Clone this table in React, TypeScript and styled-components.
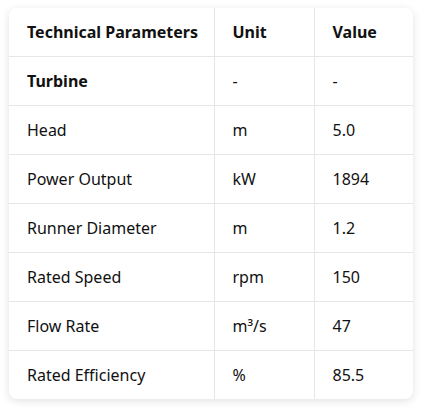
import styled, { createGlobalStyle } from 'styled-components';

const Global = createGlobalStyle`
  body {
    margin: 0;
    background: #ffffff;
    font-family: "Noto Sans", "Open Sans", sans-serif;
    color: #111111;
  }
`;

const Page = styled.div`
  padding: 8px 12px 10px 9px;
`;

const Card = styled.div`
  width: 404px;
  border-radius: 8px;
  overflow: hidden;
  background: #ffffff;
  box-shadow: 0 2px 8px rgba(0, 0, 0, 0.12);
`;

const Table = styled.table`
  width: 100%;
  border-collapse: collapse;
  table-layout: fixed;

  tbody tr:last-child td {
    border-bottom: none;
  }
`;

const Cell = styled.td<{ $bold?: boolean }>`
  height: 48px;
  padding: 0 0 0 18px;
  font-size: 16px;
  font-weight: ${(p) => (p.$bold ? 700 : 400)};
  border-bottom: 1px solid #e6e6e6;
  border-right: 1px solid #e6e6e6;
  vertical-align: middle;
  &:last-child {
    border-right: none;
  }
`;

const HeadCell = styled(Cell).attrs({ as: 'th' })`
  text-align: left;
  font-weight: 700;
`;

const rows: [string, string, string][] = [
  ['Head', 'm', '5.0'],
  ['Power Output', 'kW', '1894'],
  ['Runner Diameter', 'm', '1.2'],
  ['Rated Speed', 'rpm', '150'],
  ['Flow Rate', 'm³/s', '47'],
  ['Rated Efficiency', '%', '85.5'],
];

export default function App() {
  return (
    <Page>
      <Global />
      <Card>
        <Table>
          <colgroup>
            <col style={{ width: 205 }} />
            <col style={{ width: 100 }} />
            <col />
          </colgroup>
          <thead>
            <tr>
              <HeadCell>Technical Parameters</HeadCell>
              <HeadCell>Unit</HeadCell>
              <HeadCell>Value</HeadCell>
            </tr>
          </thead>
          <tbody>
            <tr>
              <Cell $bold>Turbine</Cell>
              <Cell>-</Cell>
              <Cell>-</Cell>
            </tr>
            {rows.map(([name, unit, value]) => (
              <tr key={name}>
                <Cell>{name}</Cell>
                <Cell>{unit}</Cell>
                <Cell>{value}</Cell>
              </tr>
            ))}
          </tbody>
        </Table>
      </Card>
    </Page>
  );
}
